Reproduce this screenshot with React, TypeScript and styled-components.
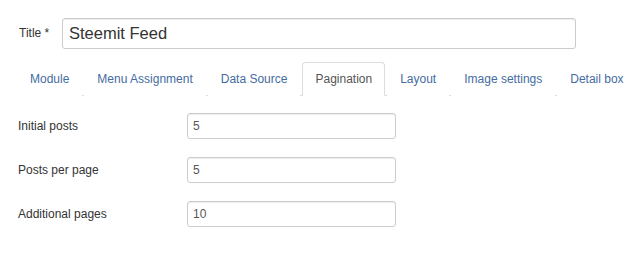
import React from 'react'
import styled, { createGlobalStyle } from 'styled-components'

const GlobalStyle = createGlobalStyle`
  html, body {
    margin: 0;
    padding: 0;
    background: #fff;
  }
  body {
    font-family: "Liberation Sans", Arial, Helvetica, sans-serif;
    font-size: 12px;
    color: #333;
  }
`

const Page = styled.div`
  width: 640px;
  height: 258px;
  box-sizing: border-box;
  padding: 18px 4px 0 17px;
  background: #fff;
  overflow: hidden;
`

const TitleRow = styled.div`
  display: flex;
  align-items: center;
  height: 30px;
`

const TitleLabel = styled.label`
  width: 45px;
  padding-left: 2px;
  box-sizing: border-box;
  font-size: 12px;
  line-height: 18px;
  color: #333;
`

const Input = styled.input<{ $width: number; $height: number; $big?: boolean }>`
  box-sizing: border-box;
  width: ${({ $width }) => $width}px;
  height: ${({ $height }) => $height}px;
  margin: 0;
  padding: 0 ${({ $big }) => ($big ? 6 : 5)}px;
  border: 1px solid #ccc;
  border-radius: 3px;
  box-shadow: inset 0 1px 1px rgba(0, 0, 0, 0.075);
  background: #fff;
  font-family: "Liberation Sans", Arial, Helvetica, sans-serif;
  font-size: ${({ $big }) => ($big ? '16.5px' : '12px')};
  color: ${({ $big }) => ($big ? '#333' : '#555')};
  outline: none;
`

const Tabs = styled.ul`
  display: flex;
  list-style: none;
  margin: 14px 0 0 0;
  padding: 0;
  border-bottom: 1px solid #ddd;
`

const Tab = styled.li<{ $active?: boolean }>`
  margin: 0 2px -1px 0;
  padding: 7px 12px;
  line-height: 18px;
  font-size: 12px;
  border: 1px solid ${({ $active }) => ($active ? '#ddd' : 'transparent')};
  border-bottom-color: ${({ $active }) => ($active ? '#fff' : 'transparent')};
  border-radius: 4px 4px 0 0;
  background: #fff;
  color: ${({ $active }) => ($active ? '#555' : '#456c9f')};
  white-space: nowrap;
  cursor: pointer;
`

const Fields = styled.div`
  display: flex;
  flex-direction: column;
  gap: 18px;
  padding-top: 17px;
`

const FieldRow = styled.div`
  display: flex;
  align-items: center;
  height: 26px;
`

const FieldLabel = styled.label`
  width: 170px;
  padding-left: 1px;
  box-sizing: border-box;
  font-size: 12px;
  line-height: 18px;
  color: #333;
`

const tabs = ['Module', 'Menu Assignment', 'Data Source', 'Pagination', 'Layout', 'Image settings', 'Detail box']

const fields = [
  { label: 'Initial posts', value: '5' },
  { label: 'Posts per page', value: '5' },
  { label: 'Additional pages', value: '10' }
]

export default function App() {
  return (
    <>
      <GlobalStyle />
      <Page>
        <TitleRow>
          <TitleLabel>Title *</TitleLabel>
          <Input $big $width={514} $height={31} defaultValue="Steemit Feed" />
        </TitleRow>

        <Tabs>
          {tabs.map(t => (
            <Tab key={t} $active={t === 'Pagination'}>
              {t}
            </Tab>
          ))}
        </Tabs>

        <Fields>
          {fields.map(f => (
            <FieldRow key={f.label}>
              <FieldLabel>{f.label}</FieldLabel>
              <Input $width={209} $height={26} defaultValue={f.value} />
            </FieldRow>
          ))}
        </Fields>
      </Page>
    </>
  )
}
